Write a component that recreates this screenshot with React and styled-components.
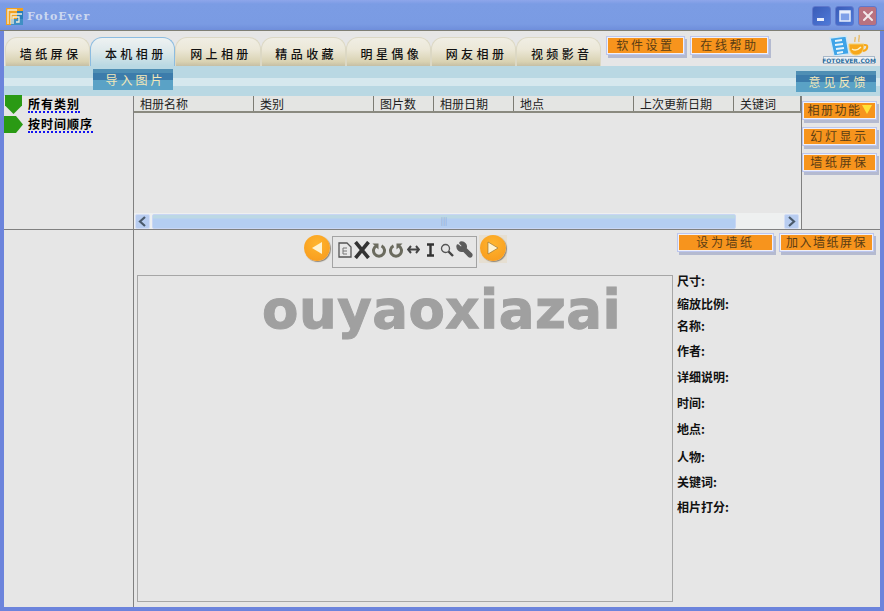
import styled, { createGlobalStyle } from "styled-components";
import { Wrench, X } from "lucide-react";

const cjk = `"Noto Sans CJK SC", "Liberation Sans", sans-serif`;

const Global = createGlobalStyle`
  html, body { margin: 0; padding: 0; background: #e6e6e6; }
  * { box-sizing: border-box; }
`;

const Win = styled.div`
  width: 884px;
  height: 611px;
  display: flex;
  flex-direction: column;
  overflow: hidden;
  background: #6c84dc;
  font-family: ${cjk};
  font-size: 12px;
  color: #222;
`;
const TitleBar = styled.div`
  height: 31px;
  flex: none;
  display: flex;
  align-items: center;
  padding: 2px 7px 0 6px;
  background: linear-gradient(#8ea6ea 0, #7b9ce4 4px, #7a9be3 24px, #6f8edb 100%);
  border-bottom: 1px solid #7f7f74;
`;
const TitleText = styled.span`
  margin-left: 4px;
  font-family: "DejaVu Serif", serif;
  font-size: 11px;
  font-weight: bold;
  letter-spacing: 1.1px;
  color: #ccd8f0;
  flex: 1;
`;
const WinBtn = styled.div`
  width: 19px;
  height: 20px;
  margin-left: 4px;
  border-radius: 3px;
  border: 1px solid #5f78cc;
  background: ${(p) => (p.$close ? "#b9717f" : "linear-gradient(135deg, #3a5cb8, #4f7ad8)")};
  display: flex;
  align-items: center;
  justify-content: center;
`;
const Body = styled.div`
  flex: 1;
  margin: 0 4px 4px 4px;
  background: #e6e6e6;
  display: flex;
  flex-direction: column;
  min-height: 0;
`;
const TopRow = styled.div`
  height: 35px;
  flex: none;
  display: flex;
  align-items: flex-start;
  padding: 6px 0 0 1px;
`;
const Tabs = styled.div`
  display: flex;
  height: 29px;
  width: 597px;
  flex: none;
`;
const Tab = styled.div`
  width: 85.2px;
  height: 29px;
  flex: none;
  border-radius: 12px 12px 0 0;
  display: flex;
  align-items: center;
  justify-content: center;
  letter-spacing: 3.4px;
  padding: 3px 0 0 6px;
  font-size: 12px;
  font-weight: 500;
  color: #111;
  background: ${(p) =>
    p.$active
      ? "linear-gradient(#eef2f2, #dce8ea 50%, #b9d8e3)"
      : "linear-gradient(#f0eee4, #ece8d8 40%, #d9d2b2 85%, #c6bfa4)"};
  border: 1px solid ${(p) => (p.$active ? "#8cbce0" : "#dcd8c4")};
  border-bottom: none;
`;
const Orange = styled.div`
  width: ${(p) => p.$w}px;
  height: 15px;
  flex: none;
  padding-bottom: 2px;
  background: #f7941d;
  color: #5b3d14;
  display: flex;
  align-items: center;
  justify-content: center;
  letter-spacing: ${(p) => p.$ls ?? 2.6}px;
  font-size: 12px;
  line-height: 13px;
  white-space: nowrap;
  box-shadow: 0 0 0 1px #f0f0f8, 0 0 0 2px #bcc6ee, 2px 3px 0 2px #b4bad0;
`;
const TopButtons = styled.div`
  display: flex;
  gap: 9px;
  margin: 1px 0 0 6px;
`;
const LogoWrap = styled.div`
  margin: -3px 0 0 55px;
`;
const Band = styled.div`
  height: 30px;
  flex: none;
  display: flex;
  justify-content: space-between;
  padding: 3px 4px 0 89px;
  background: linear-gradient(
    #b9d8e3 12px,
    #d6e8ee 12px,
    #d6e8ee 20px,
    #b9d8e3 20px
  );
`;
const BandBtn = styled.div`
  width: 80px;
  height: 21px;
  margin-top: ${(p) => p.$top || 0}px;
  padding-left: 5px;
  display: flex;
  align-items: center;
  justify-content: center;
  font-size: 12px;
  letter-spacing: 3px;
  color: #f4e8b8;
  background: linear-gradient(
    #4f8fb4 4px,
    #3c7cab 4px,
    #3c7cab 11px,
    #5aa2c6 11px
  );
`;
const Upper = styled.div`
  height: 134px;
  flex: none;
  display: flex;
  border-bottom: 1px solid #808080;
`;
const Side = styled.div`
  width: 130px;
  flex: none;
  border-right: 1px solid #808080;
`;
const TreeList = styled.div`
  display: flex;
  flex-direction: column;
  gap: 3px;
`;
const TreeRow = styled.div`
  display: flex;
  align-items: center;
  height: 17px;
  gap: 5px;
`;
const TreeLabel = styled.span`
  font-weight: bold;
  font-size: 12px;
  letter-spacing: 1px;
  color: #000;
  line-height: 14px;
  border-bottom: 2px dotted #1414f0;
`;
const TableCol = styled.div`
  width: 667px;
  flex: none;
  display: flex;
  flex-direction: column;
`;
const Head = styled.div`
  height: 17px;
  flex: none;
  display: flex;
  background: #e4e5e3;
  border-bottom: 2px solid #8a8a80;
`;
const HeadCell = styled.div`
  width: ${(p) => p.$w}px;
  flex: none;
  padding-left: 6px;
  line-height: 15px;
  font-size: 12px;
  color: #222;
  border-right: 1px solid #7c7c74;
`;
const TableBody = styled.div`
  flex: 1;
`;
const Scroll = styled.div`
  height: 16px;
  flex: none;
  display: flex;
  align-items: center;
  padding: 0 1px;
  background: #eef0f0;
`;
const ScrollBtn = styled.div`
  width: 15px;
  height: 15px;
  flex: none;
  border-radius: 2px;
  background: #b8cdf0;
  border: 1px solid #d4def6;
  display: flex;
  align-items: center;
  justify-content: center;
`;
const Thumb = styled.div`
  width: 584px;
  height: 15px;
  margin: 0 48px 0 2px;
  flex: none;
  border-radius: 2px;
  background: linear-gradient(#bcd8e4 3px, #b4cef2 4px);
  border: 1px solid #c8d6f4;
  display: flex;
  align-items: center;
  justify-content: center;
  color: #8ea6d0;
  font-size: 8px;
  line-height: 8px;
`;
const RightPanel = styled.div`
  flex: 1;
  border-left: 1px solid #808080;
  display: flex;
  flex-direction: column;
  align-items: flex-start;
  gap: 11px;
  padding: 7px 0 0 2px;
`;
const Lower = styled.div`
  flex: 1;
  display: flex;
  min-height: 0;
`;
const Center = styled.div`
  width: 542px;
  flex: none;
  display: flex;
  flex-direction: column;
  align-items: center;
`;
const ToolRow = styled.div`
  height: 45px;
  flex: none;
  display: flex;
  align-items: flex-start;
  padding-top: 5px;
`;
const Circle = styled.div`
  width: 26px;
  height: 26px;
  margin-right: ${(p) => p.$mr || 0}px;
  border-radius: 50%;
  background: radial-gradient(circle at 50% 35%, #ffb52e, #f7981c);
  box-shadow: 1px 1px 1px #8f8678;
  display: flex;
  align-items: center;
  justify-content: center;
`;
const NextWrap = styled.div`
  background: #e6dfd2;
  padding: 0 1px 2px 1px;
  margin-left: 2px;
  height: 28px;
`;
const ToolBox = styled.div`
  width: 145px;
  height: 32px;
  margin-top: 1px;
  border: 1px solid #a3a3a3;
  display: flex;
  align-items: center;
  padding: 0 0 5px 4px;
`;
const ToolIcon = styled.div`
  width: 17px;
  height: 20px;
  flex: none;
  display: flex;
  align-items: center;
  justify-content: center;
`;
const RotateSvg = styled.svg`
  transform: ${(p) => (p.$flip ? "scaleX(-1)" : "none")};
`;
const FlippedWrench = styled(Wrench)`
  transform: scaleX(-1);
`;
const Preview = styled.div`
  width: 536px;
  height: 327px;
  flex: none;
  border: 1px solid #a6a6a6;
  padding: 0 0 0 124px;
  font-family: "DejaVu Sans", sans-serif;
  font-weight: bold;
  font-size: 53px;
  line-height: 68px;
  letter-spacing: 0.5px;
  -webkit-text-stroke: 1px #a0a0a0;
  color: #a0a0a0;
  white-space: nowrap;
`;
const Info = styled.div`
  flex: 1;
  display: flex;
  flex-direction: column;
  padding: 5px 0 0 1px;
`;
const InfoButtons = styled.div`
  display: flex;
  gap: 9px;
  height: 18px;
  margin: 0 0 21px 2px;
`;
const InfoLabel = styled.div`
  height: 14px;
  line-height: 14px;
  margin-top: ${(p) => p.$top}px;
  font-weight: bold;
  font-size: 12px;
  color: #111;
`;

const tabs = ["墙纸屏保", "本机相册", "网上相册", "精品收藏", "明星偶像", "网友相册", "视频影音"];
const cols = [
  ["相册名称", 120],
  ["类别", 120],
  ["图片数", 60],
  ["相册日期", 80],
  ["地点", 120],
  ["上次更新日期", 100],
  ["关键词", 67],
];
const labels = [
  ["尺寸:", 0],
  ["缩放比例:", 9],
  ["名称:", 8],
  ["作者:", 11],
  ["详细说明:", 12],
  ["时间:", 12],
  ["地点:", 12],
  ["人物:", 14],
  ["关键词:", 11],
  ["相片打分:", 11],
];

const AppIcon = () => (
  <svg width="17" height="17" viewBox="0 0 17 17">
    <rect width="17" height="17" fill="#f4a11e" />
    <rect x="11" y="3" width="6" height="14" fill="#2a7fb8" />
    <rect x="5" y="11" width="12" height="6" fill="#3f8fc4" />
    <path d="M2 16V2h9M5 16V6h11M7 16v-7h6v5h-3" fill="none" stroke="#f2eedc" strokeWidth="1.300" />
  </svg>
);

const Logo = () => (
  <svg width="54" height="30" viewBox="0 0 54 30">
    <path d="M8 4l16-2 3 18-15 2z" fill="#3fa4e8" stroke="#cfe8f8" strokeWidth="1.300" />
    <path d="M13 7l7-1M13 11l8-1M14 15l8-1M15 19l6-1" stroke="#e6f4fb" strokeWidth="1.800" />
    <path d="M27 10h15c0 7-3 11-8 11s-7-4-7-11z" fill="#f7a81b" stroke="#f4d070" />
    <path d="M30 15c3 2 6 1 9-2" fill="none" stroke="#fff0c0" strokeWidth="1.500" />
    <path d="M42 11c5-1 4 5-1 6" fill="none" stroke="#f7a81b" strokeWidth="2" />
    <path d="M33 8c-1-2 1-3 0-5M37 8c-1-3 1-4 0-7" fill="none" stroke="#e8b860" strokeWidth="1.300" />
    <rect x="1.500" y="22.500" width="51" height="7" fill="#eef2f6" stroke="#a8b8c8" />
    <text x="27" y="28.500" textAnchor="middle" fontFamily="DejaVu Sans" fontWeight="bold" fontSize="6" fill="#2f6f9f">
      FOTOEVER.COM
    </text>
  </svg>
);

const Arrow = ({ down }) => (
  <svg width="19" height="19" viewBox="0 0 19 19">
    {down ? (
      <path d="M1 0h17v11h-0.500L9.500 19 1.500 11H1z" fill="#2a9a14" />
    ) : (
      <path d="M0 1h12l7 8.500L12 18H0z" fill="#2a9a14" />
    )}
  </svg>
);

const Nav = ({ left }) => (
  <svg width="12" height="14" viewBox="0 0 12 14">
    {left ? <path d="M11 1v12L1 7z" fill="#fff3d0" /> : <path d="M1 1v12l10-6z" fill="#fff3d0" stroke="#8a6a30" strokeWidth="0.600" />}
  </svg>
);

const Chevron = ({ left }) => (
  <svg width="9" height="11" viewBox="0 0 9 11">
    <path d={left ? "M7 1L2 5.500l5 4.500" : "M2 1l5 4.500L2 10"} fill="none" stroke="#4a5a6a" strokeWidth="2.200" />
  </svg>
);

const Rotate = ({ flip }) => (
  <RotateSvg $flip={flip} width="16" height="16" viewBox="0 0 16 16">
    <path d="M5.500 3.800a5.500 5.500 0 1 0 5 0" fill="none" stroke="#6b6b5e" strokeWidth="3" />
    <path d="M1.500 1.500h6v6z" fill="#6b6b5e" />
  </RotateSvg>
);

export default function App() {
  return (
    <Win>
      <Global />
      <TitleBar>
        <AppIcon />
        <TitleText>FotoEver</TitleText>
        <WinBtn>
          <svg width="12" height="12" viewBox="0 0 12 12">
            <rect x="1" y="8" width="7" height="3" fill="#e8eefc" />
          </svg>
        </WinBtn>
        <WinBtn>
          <svg width="12" height="12" viewBox="0 0 12 12">
            <rect x="1" y="1" width="10" height="10" fill="#7fa0e8" stroke="#e8eefc" strokeWidth="1.500" />
            <rect x="1" y="1" width="10" height="2.500" fill="#e8eefc" />
          </svg>
        </WinBtn>
        <WinBtn $close>
          <X size={16} strokeWidth={3} color="#f4e8ea" />
        </WinBtn>
      </TitleBar>
      <Body>
        <TopRow>
          <Tabs>
            {tabs.map((t, i) => (
              <Tab key={t} $active={i === 1}>{t}</Tab>
            ))}
          </Tabs>
          <TopButtons>
            <Orange $w={75}>软件设置</Orange>
            <Orange $w={75}>在线帮助</Orange>
          </TopButtons>
          <LogoWrap>
            <Logo />
          </LogoWrap>
        </TopRow>
        <Band>
          <BandBtn>导入图片</BandBtn>
          <BandBtn $top={2}>意见反馈</BandBtn>
        </Band>
        <Upper>
          <Side>
            <TreeList>
              <TreeRow>
                <Arrow down />
                <TreeLabel>所有类别</TreeLabel>
              </TreeRow>
              <TreeRow>
                <Arrow />
                <TreeLabel>按时间顺序</TreeLabel>
              </TreeRow>
            </TreeList>
          </Side>
          <TableCol>
            <Head>
              {cols.map(([c, w]) => (
                <HeadCell key={c} $w={w}>{c}</HeadCell>
              ))}
            </Head>
            <TableBody />
            <Scroll>
              <ScrollBtn><Chevron left /></ScrollBtn>
              <Thumb>|||</Thumb>
              <ScrollBtn><Chevron /></ScrollBtn>
            </Scroll>
          </TableCol>
          <RightPanel>
            <Orange $w={71} $ls={1.500}>
              相册功能
              <svg width="10" height="9" viewBox="0 0 10 9">
                <path d="M0 0h10L5 9z" fill="#ffe23a" />
              </svg>
            </Orange>
            <Orange $w={71}>幻灯显示</Orange>
            <Orange $w={71}>墙纸屏保</Orange>
          </RightPanel>
        </Upper>
        <Lower>
          <Side />
          <Center>
            <ToolRow>
              <Circle $mr={2}><Nav left /></Circle>
              <ToolBox>
                <ToolIcon>
                  <svg width="14" height="16" viewBox="0 0 14 16">
                    <path d="M1 1h8l4 4v10H1z" fill="#e8e8e8" stroke="#555" strokeWidth="1.300" />
                    <path d="M5 6h4M5 9h4M5 12h4M5 6v6" stroke="#777" fill="none" />
                  </svg>
                </ToolIcon>
                <ToolIcon>
                  <svg width="16" height="18" viewBox="0 0 16 18">
                    <path d="M1.500 1l13 16M14.500 1l-13 16" stroke="#333" strokeWidth="3.600" fill="none" />
                  </svg>
                </ToolIcon>
                <ToolIcon><Rotate /></ToolIcon>
                <ToolIcon><Rotate flip /></ToolIcon>
                <ToolIcon>
                  <svg width="13" height="9" viewBox="0 0 13 9">
                    <path d="M4 1L1 4.500 4 8M9 1l3 3.500L9 8M1 4.500h11" stroke="#444" strokeWidth="2" fill="none" />
                  </svg>
                </ToolIcon>
                <ToolIcon>
                  <svg width="9" height="14" viewBox="0 0 9 14">
                    <path d="M1 1.500h7M1 12.500h7M4.500 1.500v11" stroke="#333" strokeWidth="2.400" fill="none" />
                  </svg>
                </ToolIcon>
                <ToolIcon>
                  <svg width="14" height="14" viewBox="0 0 14 14">
                    <circle cx="5.500" cy="5.500" r="4" fill="none" stroke="#555" strokeWidth="1.300" />
                    <path d="M8.500 8.500l4.500 4.500" stroke="#444" strokeWidth="2.400" />
                  </svg>
                </ToolIcon>
                <ToolIcon><FlippedWrench size={17} strokeWidth={3} color="#5c5c5c" fill="#5c5c5c" /></ToolIcon>
              </ToolBox>
              <NextWrap>
                <Circle><Nav /></Circle>
              </NextWrap>
            </ToolRow>
            <Preview>ouyaoxiazai</Preview>
          </Center>
          <Info>
            <InfoButtons>
              <Orange $w={93}>设为墙纸</Orange>
              <Orange $w={91} $ls={1.500}>加入墙纸屏保</Orange>
            </InfoButtons>
            {labels.map(([t, top]) => (
              <InfoLabel key={t} $top={top}>{t}</InfoLabel>
            ))}
          </Info>
        </Lower>
      </Body>
    </Win>
  );
}
